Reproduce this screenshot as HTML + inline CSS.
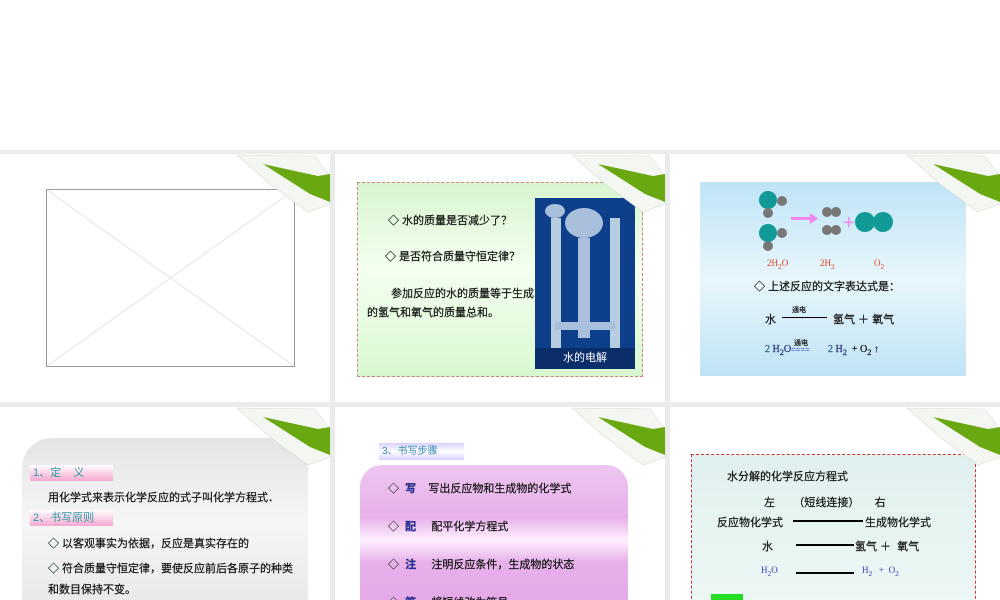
<!DOCTYPE html>
<html><head><meta charset="utf-8"><style>
*{margin:0;padding:0;box-sizing:border-box}
body{width:1000px;height:600px;overflow:hidden;background:#fff;font-family:"Liberation Sans","Noto Sans CJK SC",sans-serif;position:relative}
.bg{position:absolute;left:0;top:150px;width:1000px;height:450px;background:#ebebeb}
.s{position:absolute;background:#fff;overflow:hidden}
.a{position:absolute;white-space:nowrap;font-size:11px;color:#111;-webkit-text-stroke:0.2px #111}
.serif{font-family:"Liberation Serif","Noto Serif CJK SC",serif}
</style></head><body>
<div class="bg"></div>

<!-- slide 1 -->
<div class="s" style="left:0;top:154px;width:330px;height:248px">
<svg style="position:absolute;left:46px;top:35px" width="250" height="179"><rect x="0.5" y="0.5" width="248" height="177" fill="#fff" stroke="#999"/><line x1="1" y1="1" x2="248" y2="177" stroke="#e3e3e3"/><line x1="248" y1="1" x2="1" y2="177" stroke="#e3e3e3"/></svg>
</div>

<!-- slide 2 -->
<div class="s" style="left:335px;top:154px;width:330px;height:248px">
<div style="position:absolute;left:22px;top:28px;width:286px;height:195px;border:1px dashed #d08080;background:linear-gradient(180deg,#d8f5d0 0%,#f4fff0 45%,#d8f8d0 100%)"></div>
<div class="a" style="left:53px;top:58px">◇ 水的质量是否减少了？</div>
<div class="a" style="left:50px;top:94px">◇ 是否符合质量守恒定律？</div>
<div class="a" style="left:56px;top:131px">参加反应的水的质量等于生成</div>
<div class="a" style="left:32px;top:150px">的氢气和氧气的质量总和。</div>
<div style="position:absolute;left:200px;top:44px;width:100px;height:171px;background:#0d3f8a">
 <div style="position:absolute;left:16px;top:20px;width:10px;height:130px;background:#b8cce0"></div>
 <div style="position:absolute;left:75px;top:20px;width:10px;height:130px;background:#b8cce0"></div>
 <div style="position:absolute;left:43px;top:40px;width:12px;height:100px;background:#a9c0dc"></div>
 <div style="position:absolute;left:30px;top:10px;width:38px;height:30px;border-radius:50%;background:#a9c0dc"></div>
 <div style="position:absolute;left:10px;top:6px;width:20px;height:14px;border-radius:50%;background:#a9c0dc"></div>
 <div style="position:absolute;left:20px;top:124px;width:60px;height:8px;background:#a9c0dc"></div>
 <div style="position:absolute;left:0;top:150px;width:100px;height:21px;background:#0a2e6a;color:#fff;font-size:11px;text-align:center;line-height:21px">水的电解</div>
</div>
</div>

<!-- slide 3 -->
<div class="s" style="left:670px;top:154px;width:330px;height:248px">
<div style="position:absolute;left:30px;top:28px;width:266px;height:194px;background:linear-gradient(180deg,#bfe4f6 0%,#e8f6fb 50%,#bfe3f5 100%)"></div>
<svg style="position:absolute;left:85px;top:34px" width="150" height="65">
<circle cx="13" cy="12" r="9" fill="#119a98"/><circle cx="27" cy="13" r="5" fill="#777"/><circle cx="13" cy="25" r="5" fill="#777"/>
<circle cx="13" cy="45" r="9" fill="#119a98"/><circle cx="27" cy="45" r="5" fill="#777"/><circle cx="13" cy="58" r="5" fill="#777"/>
<rect x="36" y="29" width="20" height="3" fill="#ee88ee"/><polygon points="55,25 63,30.5 55,36" fill="#ee88ee"/>
<circle cx="72" cy="24" r="5" fill="#777"/><circle cx="81" cy="24" r="5" fill="#777"/><circle cx="72" cy="42" r="5" fill="#777"/><circle cx="81" cy="42" r="5" fill="#777"/>
<text x="88" y="41" fill="#ee88ee" font-size="20" font-family="Liberation Sans">+</text>
<circle cx="110" cy="34" r="10" fill="#119a98"/><circle cx="128" cy="34" r="10" fill="#119a98"/>
</svg>
<div class="a serif" style="left:97px;top:104px;color:#e04020;font-size:9px;-webkit-text-stroke:0">2H<sub>2</sub>O</div>
<div class="a serif" style="left:150px;top:104px;color:#e04020;font-size:9px;-webkit-text-stroke:0">2H<sub>2</sub></div>
<div class="a serif" style="left:204px;top:104px;color:#e04020;font-size:9px;-webkit-text-stroke:0">O<sub>2</sub></div>
<div class="a" style="left:84px;top:124px">◇ 上述反应的文字表达式是：</div>
<div class="a" style="left:95px;top:157px">水</div>
<div class="a" style="left:122px;top:151px;font-size:7px">通电</div>
<div style="position:absolute;left:112px;top:163px;width:45px;height:1px;background:#000"></div>
<div class="a" style="left:163px;top:157px">氢气 ＋ 氧气</div>
<div class="a serif" style="left:95px;top:190px;color:#2a8fbf;font-size:10px">2 <span style="color:#3040c0">H<sub>2</sub>O</span></div>
<div class="a" style="left:124px;top:184px;font-size:7px">通电</div>
<div class="a" style="left:121px;top:191px;font-size:8px;color:#4050c0;-webkit-text-stroke:0">====</div>
<div class="a serif" style="left:158px;top:190px;color:#2a8fbf;font-size:10px">2 <span style="color:#3040c0">H<sub>2</sub></span> &nbsp;<span style="color:#000">+ O<sub>2</sub></span> <span style="color:#3040c0">↑</span></div>
</div>

<!-- slide 4 -->
<div class="s" style="left:0;top:407px;width:330px;height:193px">
<div style="position:absolute;left:22px;top:31px;width:286px;height:170px;border-radius:30px 30px 0 0;background:linear-gradient(180deg,#e4e4e4,#f6f6f6 50%,#e8e8e8)"></div>
<div class="a" style="left:30px;top:58px;width:83px;height:16px;background:linear-gradient(180deg,#fff,#f6a8d0);color:#2a9aa0;padding-left:3px;line-height:16px;-webkit-text-stroke:0">1、定 &nbsp; &nbsp;义</div>
<div class="a" style="left:48px;top:82px">用化学式来表示化学反应的式子叫化学方程式．</div>
<div class="a" style="left:30px;top:103px;width:83px;height:16px;background:linear-gradient(180deg,#fff,#f6a8d0);color:#2a9aa0;padding-left:3px;line-height:16px;-webkit-text-stroke:0">2、书写原则</div>
<div class="a" style="left:48px;top:128px"><span style="color:#2a9aa0">◇</span> 以客观事实为依据，反应是真实存在的</div>
<div class="a" style="left:48px;top:153px"><span style="color:#2a9aa0">◇</span> 符合质量守恒定律，要使反应前后各原子的种类</div>
<div class="a" style="left:48px;top:174px">和数目保持不变。</div>
</div>

<!-- slide 5 -->
<div class="s" style="left:335px;top:407px;width:330px;height:193px">
<div class="a" style="left:44px;top:36px;width:85px;height:17px;background:linear-gradient(180deg,#d8d0ff,#fff 50%,#d8d0ff);color:#3a8fb0;line-height:17px;padding-left:3px;font-size:10px;-webkit-text-stroke:0">3、书写步骤</div>
<div style="position:absolute;left:25px;top:58px;width:268px;height:150px;border-radius:22px 22px 0 0;background:linear-gradient(180deg,#eec6f0,#e7b0ea 35%,#fff0ff 50%,#e7b0ea 65%,#e4a8e8)"></div>
<div class="a" style="left:53px;top:73px"><span style="color:#aaa">◇</span> &nbsp;<b style="color:#2030c0">写</b> &nbsp; &nbsp;写出反应物和生成物的化学式</div>
<div class="a" style="left:53px;top:111px"><span style="color:#aaa">◇</span> &nbsp;<b style="color:#2030c0">配</b> &nbsp; &nbsp; 配平化学方程式</div>
<div class="a" style="left:53px;top:149px"><span style="color:#aaa">◇</span> &nbsp;<b style="color:#2030c0">注</b> &nbsp; &nbsp; 注明反应条件，生成物的状态</div>
<div class="a" style="left:53px;top:187px"><span style="color:#aaa">◇</span> &nbsp;<b style="color:#2030c0">等</b> &nbsp; &nbsp; 将短线改为等号</div>
</div>

<!-- slide 6 -->
<div class="s" style="left:670px;top:407px;width:330px;height:193px">
<div style="position:absolute;left:21px;top:47px;width:285px;height:160px;border:1px dashed #d03030;background:linear-gradient(180deg,#e0f0ee,#eef8f6)"></div>
<div class="a" style="left:57px;top:61px">水分解的化学反应方程式</div>
<div class="a" style="left:94px;top:87px">左 &nbsp; &nbsp; &nbsp;（短线连接） &nbsp; &nbsp; 右</div>
<div class="a" style="left:47px;top:107px">反应物化学式</div>
<div style="position:absolute;left:123px;top:113px;width:70px;height:2px;background:#000"></div>
<div class="a" style="left:195px;top:107px">生成物化学式</div>
<div class="a" style="left:92px;top:131px">水</div>
<div style="position:absolute;left:126px;top:137px;width:58px;height:2px;background:#000"></div>
<div class="a" style="left:185px;top:131px">氢气 ＋ &nbsp;氧气</div>
<div class="a serif" style="left:91px;top:158px;color:#3040c0;font-size:9px;-webkit-text-stroke:0">H<sub>2</sub>O</div>
<div style="position:absolute;left:126px;top:165px;width:58px;height:2px;background:#000"></div>
<div class="a serif" style="left:192px;top:158px;color:#3040c0;font-size:9px;-webkit-text-stroke:0">H<sub>2</sub> &nbsp; + &nbsp;O<sub>2</sub></div>
<div style="position:absolute;left:41px;top:187px;width:32px;height:10px;background:#22dd22"></div>
</div>

<!-- curls -->
<svg style="position:absolute;left:0;top:0" width="1000" height="600">
<defs><g id="c">
<polygon points="-93,1 -15,2 -6,14 0,22 0,50 -22,58 -60,30" fill="#f4f6f2" stroke="#d8dcd4" stroke-width="0.6"/>
<polygon points="-67,10 -12,22 0,20 0,48 -20,40" fill="#6aa812"/>
</g></defs>
<use href="#c" x="330" y="154"/><use href="#c" x="665" y="154"/><use href="#c" x="1000" y="154"/>
<use href="#c" x="330" y="407"/><use href="#c" x="665" y="407"/><use href="#c" x="1000" y="407"/>
</svg>
</body></html>
